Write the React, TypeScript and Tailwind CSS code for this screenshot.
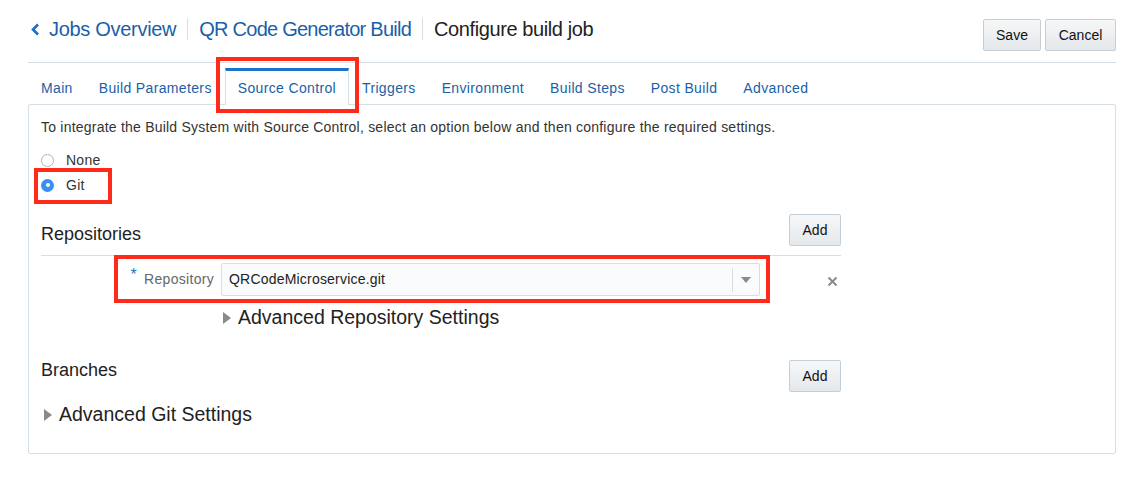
import React from 'react';

const BLUE = 'text-[#1a5fa9]';

const tabs = ['Main', 'Build Parameters', 'Source Control', 'Triggers', 'Environment', 'Build Steps', 'Post Build', 'Advanced'];

function Btn({ label, className = '' }: { label: string; className?: string }) {
  return (
    <button
      className={`h-[32px] rounded-[2px] border border-[#c4ced7] bg-gradient-to-b from-[#f6f7f8] to-[#e4e8eb] text-[14px] text-[#111] ${className}`}
    >
      {label}
    </button>
  );
}

function Triangle() {
  return (
    <svg width="8" height="12" viewBox="0 0 8 12" className="shrink-0">
      <path d="M0 0 L8 6 L0 12 Z" fill="#8a8a8a" />
    </svg>
  );
}

export default function App() {
  return (
    <div
      className="relative w-[1137px] h-[478px] bg-white pl-[28px] pr-[21px] overflow-hidden"
      style={{ fontFamily: '"Liberation Sans", Arial, sans-serif' }}
    >
      {/* Header */}
      <div className="flex items-start justify-between pt-[19px] border-b border-[#d6dfe6] h-[63px]">
        <div className="flex items-center h-[20px] text-[20px] tracking-[-0.3px]">
          <svg width="9" height="13" viewBox="0 0 9 13" className="ml-[3px] mr-[9px]">
            <path d="M7 1.5 L2 6.5 L7 11.5" stroke="#1a6fc9" strokeWidth="2.6" fill="none" />
          </svg>
          <span className={BLUE}>Jobs Overview</span>
          <span className="mx-[11px] w-px h-[22px] bg-[#d6dfe6]" />
          <span className={`${BLUE} tracking-[-0.75px]`}>QR Code Generator Build</span>
          <span className="mx-[11px] w-px h-[22px] bg-[#d6dfe6]" />
          <span className="text-[#222] tracking-[-0.4px]">Configure build job</span>
        </div>
        <div className="flex gap-[4px]">
          <Btn label="Save" className="w-[58px]" />
          <Btn label="Cancel" className="w-[71px]" />
        </div>
      </div>

      {/* Tabs */}
      <div className="flex h-[41px] items-end">
        {tabs.map((t) => {
          const active = t === 'Source Control';
          return (
            <div
              key={t}
              className={`px-[12px] h-[37px] mb-[-1px] flex items-center text-[14px] tracking-[0.35px] border-t-[3px] border-x ${BLUE} ${
                active
                  ? 'relative z-10 bg-white border-t-[#1a73c8] border-x-[#d6dfe6]'
                  : 'border-t-transparent border-x-transparent'
              }`}
            >
              {t}
            </div>
          );
        })}
      </div>

      {/* Panel */}
      <div className="border border-[#d6dfe6] rounded-[2px] h-[350px] pl-[12px] pr-[12px]">
        <p className="text-[14px] text-[#333] mt-[14px] leading-[16px] tracking-[0.22px]">
          To integrate the Build System with Source Control, select an option below and then configure the required settings.
        </p>
        <div className="mt-[18px] flex flex-col gap-[11px] text-[14px] text-[#333] tracking-[0.25px]">
          <label className="flex items-center gap-[12px] h-[14px]">
            <span className="w-[13px] h-[13px] rounded-full border border-[#b4b4b4] bg-white" />
            None
          </label>
          <label className="flex items-center gap-[12px] h-[14px]">
            <span className="w-[13px] h-[13px] rounded-full bg-[#3a8ef0] flex items-center justify-center">
              <span className="w-[4px] h-[4px] rounded-full bg-white" />
            </span>
            Git
          </label>
        </div>

        <div className="w-[800px] mt-[22px]">
          <div className="flex items-center justify-between h-[32px]">
            <span className="text-[18px] text-[#222] mt-[8px]">Repositories</span>
            <Btn label="Add" className="w-[52px]" />
          </div>
          <div className="border-b border-[#d6dfe6] mt-[9px]" />
          <div className="flex items-center mt-[7px] h-[33px]">
            <div className="w-[180px] flex items-center justify-end pr-[7px] text-[14px] text-[#666] tracking-[0.3px]">
              <span className="text-[#1a73c8] text-[16px] mr-[7px] self-start leading-[12px]">*</span>
              Repository
            </div>
            <div className="w-[539px] h-[33px] border border-[#d6dfe6] rounded-[2px] bg-[#fafbfc] flex items-center">
              <span className="flex-1 pl-[7px] text-[14px] text-[#222] tracking-[0.2px]">QRCodeMicroservice.git</span>
              <span className="w-px h-[24px] bg-[#d6dfe6]" />
              <span className="w-[26px] flex justify-center">
                <svg width="10" height="6" viewBox="0 0 10 6">
                  <path d="M0 0 L10 0 L5 6 Z" fill="#8a8a8a" />
                </svg>
              </span>
            </div>
            <span className="ml-[67px] mt-[4px]">
              <svg width="11" height="11" viewBox="0 0 11 11">
                <path d="M1.5 1.5 L9.5 9.5 M9.5 1.5 L1.5 9.5" stroke="#8a8a8a" strokeWidth="2" />
              </svg>
            </span>
          </div>
          <div className="flex items-center gap-[7px] ml-[182px] mt-[11px] h-[22px] text-[19.5px] text-[#222]">
            <Triangle />
            Advanced Repository Settings
          </div>

          <div className="flex items-center justify-between h-[32px] mt-[31px]">
            <span className="text-[18px] text-[#222] mt-[-12px]">Branches</span>
            <Btn label="Add" className="w-[52px]" />
          </div>
          <div className="flex items-center gap-[7px] ml-[3px] mt-[12px] h-[22px] text-[19.5px] text-[#222]">
            <Triangle />
            Advanced Git Settings
          </div>
        </div>
      </div>

      {/* Annotation boxes */}
      <div className="absolute left-[216px] top-[57px] w-[143px] h-[56px] border-[4px] border-[#ff2a1a] pointer-events-none" />
      <div className="absolute left-[34px] top-[168px] w-[78px] h-[36px] border-[4px] border-[#ff2a1a] pointer-events-none" />
      <div className="absolute left-[114px] top-[255px] w-[656px] h-[48px] border-[4px] border-[#ff2a1a] pointer-events-none" />
    </div>
  );
}
